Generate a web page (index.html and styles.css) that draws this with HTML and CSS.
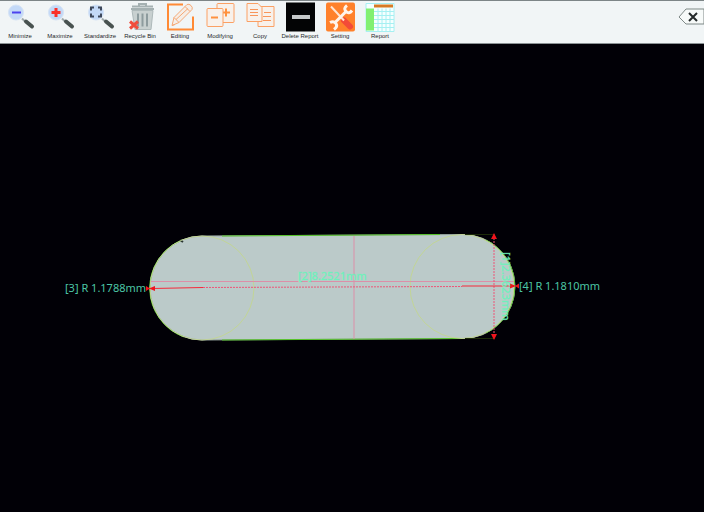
FILE: index.html
```html
<!DOCTYPE html>
<html lang="en">
<head>
<meta charset="utf-8">
<title>Measurement</title>
<link rel="stylesheet" href="styles.css">
</head>
<body>
<header class="toolbar">
  <nav class="tools" aria-label="Tools">
    <button class="tool" type="button">
      <svg class="icon" viewBox="0 0 30 30" aria-hidden="true"><path class="handle" d="M17 17l3 3"/><path class="grip" d="M21 20l6 5"/><circle class="lens" cx="11" cy="11" r="7.5"/><path class="minus" d="M7 11h9"/></svg>
      <span>Minimize</span>
    </button>
    <button class="tool" type="button">
      <svg class="icon" viewBox="0 0 30 30" aria-hidden="true"><path class="handle" d="M17 17l3 3"/><path class="grip" d="M21 20l6 5"/><circle class="lens" cx="11" cy="11" r="7.5"/><path class="plus" d="M6.500 11h9M11 6.500v9"/></svg>
      <span>Maximize</span>
    </button>
    <button class="tool" type="button">
      <svg class="icon" viewBox="0 0 30 30" aria-hidden="true"><path class="handle" d="M17 17l3 3"/><path class="grip" d="M21 20l6 5"/><circle class="lens" cx="11" cy="11" r="7.5"/><path class="corners" d="M6 9V6h3M13 6h3v3M16 12v3h-3M9 15H6v-3"/></svg>
      <span>Standardize</span>
    </button>
    <button class="tool" type="button">
      <svg class="icon" viewBox="0 0 30 30" aria-hidden="true"><path class="bin" d="M7 9h21l-2 19H10z"/><path class="lid" d="M6 7.500h23M7 5h21M14 4V2.500h7V4"/><path class="slats" d="M13 12v13M17.500 12v13M22 12v13"/><path class="cross" d="M5 20l8 7M13 20l-8 7"/></svg>
      <span>Recycle Bin</span>
    </button>
    <button class="tool" type="button">
      <svg class="icon" viewBox="0 0 30 30" aria-hidden="true"><path class="frame" d="M18 3H3v25h25V15"/><path class="pencil" d="M7 24l2-8L22 3q2-1 4 1t1 4L14 21zM9 16l5 5M20 5l5 5M11 18L23 7M7 24l3-1"/></svg>
      <span>Editing</span>
    </button>
    <button class="tool" type="button">
      <svg class="icon" viewBox="0 0 30 30" aria-hidden="true"><rect class="sheet" x="12" y="2" width="17" height="19" rx="1"/><path class="sign" d="M17 11h8M21 7v8"/><rect class="sheet" x="2" y="7" width="16" height="18" rx="1"/><path class="sign" d="M6 16h7"/></svg>
      <span>Modifying</span>
    </button>
    <button class="tool" type="button">
      <svg class="icon" viewBox="0 0 30 30" aria-hidden="true"><path class="sheet" d="M13 5h16v20H13z"/><path class="lines" d="M19 11h7M18 15h8M18 19h8"/><path class="sheet" d="M2 2h11l4 4v14H2z"/><path class="lines" d="M5 8h8M5 11h8M5 14h8"/></svg>
      <span>Copy</span>
    </button>
    <button class="tool" type="button">
      <svg class="icon" viewBox="0 0 30 30" aria-hidden="true"><path class="black" d="M1 1h29v29H1z"/><path class="dash" d="M7 15.500h18"/></svg>
      <span>Delete Report</span>
    </button>
    <button class="tool" type="button">
      <svg class="icon" viewBox="0 0 30 30" aria-hidden="true"><rect class="orange" x="1" y="1" width="29" height="29" rx="2"/><path class="driver" d="M19 19l6 6"/><path class="shaft" d="M6 5l13 14"/><path class="spanner" d="M9 22L22 9"/><path class="jaws" d="M22 4q-4 3-1 6t6-1M5 21q4-2 6 1t-2 6"/></svg>
      <span>Setting</span>
    </button>
    <button class="tool" type="button">
      <svg class="icon" viewBox="0 0 30 30" aria-hidden="true"><path class="cells" d="M1 1h28v29H1z"/><path class="rules" d="M1 2v28M13 7v23M17 7v23M21 7v23M25 7v23M29 2v28M1 2h28M9 10h20M9 14h20M9 18h20M9 22h20M9 26h20M1 30h28"/><path class="green" d="M1 7h8v22H1z"/><path class="brown" d="M9 3h19v3H9z"/></svg>
      <span>Report</span>
    </button>
  </nav>
  <button class="close" type="button" aria-label="Close">
    <svg viewBox="0 0 26 18" aria-hidden="true"><path class="tag" d="M26 1H8L1 9l7 7h18z"/><path class="x" d="M11 5l8 8M19 5l-8 8"/></svg>
  </button>
</header>
<main class="stage">
  <svg class="view" viewBox="0 44 704 468" role="img" aria-label="Measured part">
    <path class="part" d="M202 236L463 234.500A52 52 0 0 1 463 338.500L202 340A52 52 0 0 1 202 236z"/>
    <path class="edge" d="M222 236L440 234.500M222 340L463 338.500M182 240A52 52 0 0 0 184 337M486 240A52 52 0 0 1 486 333"/>
    <path class="speck" d="M180 240l3 2"/>
    <circle class="fit" cx="202" cy="288" r="52"/>
    <circle class="fit" cx="462" cy="286.500" r="52"/>
    <path class="guide" d="M465 234.500h30M465 338.500h30"/>
    <path class="axis" d="M151 281.500H514M354 236V339"/>
    <path class="measure" d="M203 287.500L462 286.500M494 238V335"/>
    <path class="radius" d="M152 288.500L203 287.500M462 286L512 286"/>
    <path class="arrow" d="M149 288.500l6-2.500v5zM516 286l-6-2.500v5zM146 286l4 2.500-4 2.500zM519 283.500l-4 2.500 4 2.500zM494 233l-3 6h6zM494 340l-3-6h6z"/>
    <text class="value" x="65" y="292">[3] R 1.1788mm</text>
    <text class="value" x="519" y="290">[4] R 1.1810mm</text>
    <text class="value bright" x="298" y="280">[2]8.2521mm</text>
    <text class="value bright" transform="translate(502 252) rotate(90)">[1]2.3623mm</text>
  </svg>
</main>
</body>
</html>
```
FILE: styles.css
```css
* { box-sizing: border-box; }

body {
  margin: 0;
  min-height: 100vh;
  display: flex;
  flex-direction: column;
  background: #010006;
  font-family: "Liberation Sans", Arial, sans-serif;
}

.toolbar {
  display: flex;
  justify-content: space-between;
  align-items: flex-start;
  background: #f1f5f6;
  border-top: 1px solid #7d8587;
  border-bottom: 1px solid #8b9294;
}

.tools { display: flex; }

button {
  margin: 0;
  padding: 0;
  border: 0;
  background: none;
  font: inherit;
  color: inherit;
}

.tool {
  width: 40px;
  height: 42px;
  display: flex;
  flex-direction: column;
  align-items: center;
  font-size: 6px;
  line-height: 8px;
  color: #26292b;
  white-space: nowrap;
}

.icon { width: 30px; height: 31px; fill: none; flex: none; }
.black { fill: #030405; }
.lens { fill: #c3d9f7; stroke: #d5e3f5; }
.handle { stroke: #9fa9ab; stroke-width: 2; }
.grip { stroke: #485250; stroke-width: 4; stroke-linecap: round; }
.minus { stroke: #4b42ee; stroke-width: 2; }
.plus { stroke: #fa3029; stroke-width: 3; }
.corners { stroke: #3e485a; stroke-width: 2; }
.bin { fill: #c8d0d0; stroke: #aeb9ba; }
.lid { stroke: #a5b1b2; stroke-width: 2; }
.slats { stroke: #8d9b9e; stroke-width: 2; }
.cross { stroke: #f04d3c; stroke-width: 3; }
.frame { stroke: #ff8a35; stroke-width: 2; }
.pencil { fill: #f5eee7; stroke: #f6a875; }
.sheet { fill: #f8f1eb; stroke: #fba064; stroke-width: 1; }
.sign { stroke: #ff913e; stroke-width: 2; }
.lines { stroke: #f8955a; stroke-width: 1; }
.dash { stroke: #c5c9ca; stroke-width: 4; }
.orange { fill: #ff812b; }
.driver { stroke: #f34b38; stroke-width: 6; stroke-linecap: round; }
.shaft { stroke: #ffe5d2; stroke-width: 2; }
.spanner { stroke: #fff5eb; stroke-width: 3; }
.jaws { stroke: #fff5eb; stroke-width: 3; }
.cells { fill: #f5ffff; }
.green { fill: #82f071; }
.brown { fill: #d77b25; }
.rules { stroke: #a6f0f2; stroke-width: 1; }

.close { width: 26px; height: 18px; margin-top: 7px; }
.close svg { display: block; width: 100%; height: 100%; fill: none; }
.tag { fill: #f7faf9; stroke: #7f8987; stroke-width: 1; }
.x { stroke: #24292a; stroke-width: 2; }

.stage { flex: 1; }
.view { display: block; width: 100%; fill: none; }
.part { fill: #bbcac9; stroke: #98a6a0; stroke-width: 1; }
.fit { stroke: #c2d596; stroke-width: 1; }
.edge { stroke: #55c428; stroke-width: 1; }
.speck { stroke: #283330; stroke-width: 2; }
.guide { stroke: #1c2b09; stroke-width: 1; }
.axis { stroke: #dc8fa8; stroke-width: 1; }
.measure { stroke: #ed5577; stroke-width: 1; stroke-dasharray: 2 1; }
.radius { stroke: #f52b3b; stroke-width: 1; }
.arrow { fill: #f0141c; }
.value {
  fill: #4cc5a5;
  font-family: "Noto Sans", "Open Sans", sans-serif;
  font-size: 11px;
}
.bright { fill: #6df2bb; stroke: #6df2bb; stroke-width: 1; stroke-opacity: 0.3; }
```
